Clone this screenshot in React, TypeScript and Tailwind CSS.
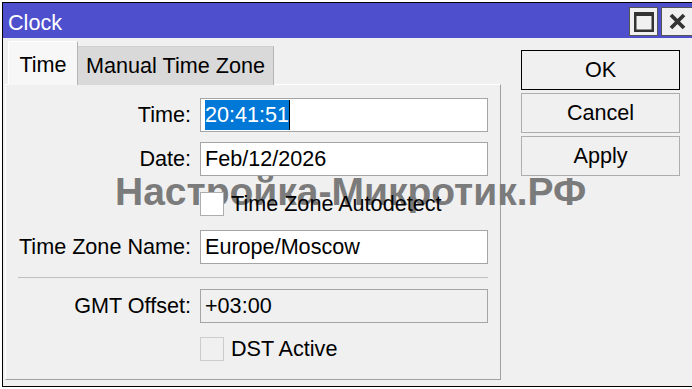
import React from "react";

function Field({ label, children }: { label: string; children: React.ReactNode }) {
  return (
    <div className="flex h-[34px] items-center">
      <div className="w-[186px] shrink-0 pr-[1px] text-right">{label}</div>
      <div className="ml-[8px] flex h-[34px] w-[288px] items-center border border-[#a5a5a5] bg-white pl-[4px]">
        {children}
      </div>
    </div>
  );
}

function Check({ label, disabled }: { label: string; disabled?: boolean }) {
  return (
    <div className="flex h-[24px] items-center">
      <div className="w-[194px] shrink-0" />
      <div
        className={
          disabled
            ? "h-[24px] w-[24px] border border-[#cccccc] bg-[#f0f0f0]"
            : "h-[24px] w-[24px] border border-[#adadad] bg-white"
        }
      />
      <span className="ml-[7px]">{label}</span>
    </div>
  );
}

function Btn({ label, primary }: { label: string; primary?: boolean }) {
  return (
    <div
      className={
        primary
          ? "flex h-[40px] w-[159px] items-center justify-center border border-black bg-[#f0f0f0]"
          : "flex h-[40px] w-[159px] items-center justify-center border border-[#adadad] bg-[#f0f0f0]"
      }
    >
      {label}
    </div>
  );
}

export default function App() {
  return (
    <div className="relative h-[389px] w-[692px] overflow-hidden bg-white font-['Liberation_Sans',Arial,sans-serif] text-[21.6px] leading-none text-black">
      <div className="ml-[2px] mt-[2px] flex h-[385px] w-[690px] flex-col border border-r-0 border-black bg-[#f0f0f0]">
        {/* title bar */}
        <div className="flex h-[35px] shrink-0 items-start bg-[#4d4fcc]">
          <span className="ml-[5px] mt-[9px] text-white">Clock</span>
          <div className="ml-auto mt-[4px] flex gap-[3px]">
            <div className="flex h-[29px] w-[29px] items-center justify-center border border-[#555] bg-[#f0f0f0]">
              <svg width="20" height="20" viewBox="0 0 20 20">
                <rect x="1.25" y="2" width="17.5" height="16.75" fill="none" stroke="#333" strokeWidth="2.5" />
                <rect x="0" y="0" width="20" height="4" fill="#333" />
              </svg>
            </div>
            <div className="flex h-[29px] w-[31px] items-center justify-center border border-r-0 border-[#555] bg-[#f0f0f0]">
              <svg width="17" height="17" viewBox="0 0 17 17">
                <path d="M2 2 L15 15 M15 2 L2 15" stroke="#333" strokeWidth="3.8" />
              </svg>
            </div>
          </div>
        </div>

        <div className="flex flex-1">
          {/* left: tabs + panel */}
          <div className="flex w-[498px] shrink-0 flex-col pl-[2px]">
            <div className="relative z-20 -mb-px flex h-[47px] items-end pl-[3px]">
              <div className="flex h-[44px] w-[70px] items-start justify-center border-l border-r border-t border-l-white border-r-[#b4b4b4] border-t-white bg-[#f7f7f7] pt-[12px]">
                Time
              </div>
              <div className="flex h-[39px] w-[196px] items-start justify-center border-r border-t border-r-[#b4b4b4] border-t-[#d0d0d0] bg-[#d9d9d9] pt-[8px]">
                Manual Time Zone
              </div>
            </div>
            <div className="relative flex h-[296px] w-[496px] flex-col border border-b-[#a0a0a0] border-l-white border-r-[#a0a0a0] border-t-white">
              <div className="pointer-events-none absolute left-[109px] top-[87px] z-10 whitespace-nowrap text-[39px] font-bold text-[#7b7b7b]">
                Настройка-Микротик.РФ
              </div>
              <div className="relative z-20 flex flex-col pt-[13px]">
                <Field label="Time:">
                  <span className="flex h-[30px] items-center border-r border-black bg-[#0078d7] text-white">
                    20:41:51
                  </span>
                </Field>
                <div className="h-[10px]" />
                <Field label="Date:">Feb/12/2026</Field>
                <div className="h-[16px]" />
                <Check label="Time Zone Autodetect" />
                <div className="h-[14px]" />
                <Field label="Time Zone Name:">Europe/Moscow</Field>
                <div className="ml-[12px] mt-[13px] h-px w-[470px] bg-[#c0c0c0]" />
                <div className="h-[11px]" />
                <div className="flex h-[34px] items-center">
                  <div className="w-[186px] shrink-0 pr-[1px] text-right">GMT Offset:</div>
                  <div className="ml-[8px] flex h-[34px] w-[288px] items-center border border-[#a5a5a5] bg-[#f0f0f0] pl-[4px]">
                    +03:00
                  </div>
                </div>
                <div className="h-[14px]" />
                <Check label="DST Active" disabled />
              </div>
            </div>
          </div>

          {/* right: buttons */}
          <div className="ml-[20px] flex flex-col gap-[3px] pt-[12px]">
            <Btn label="OK" primary />
            <Btn label="Cancel" />
            <Btn label="Apply" />
          </div>
        </div>
      </div>
    </div>
  );
}
